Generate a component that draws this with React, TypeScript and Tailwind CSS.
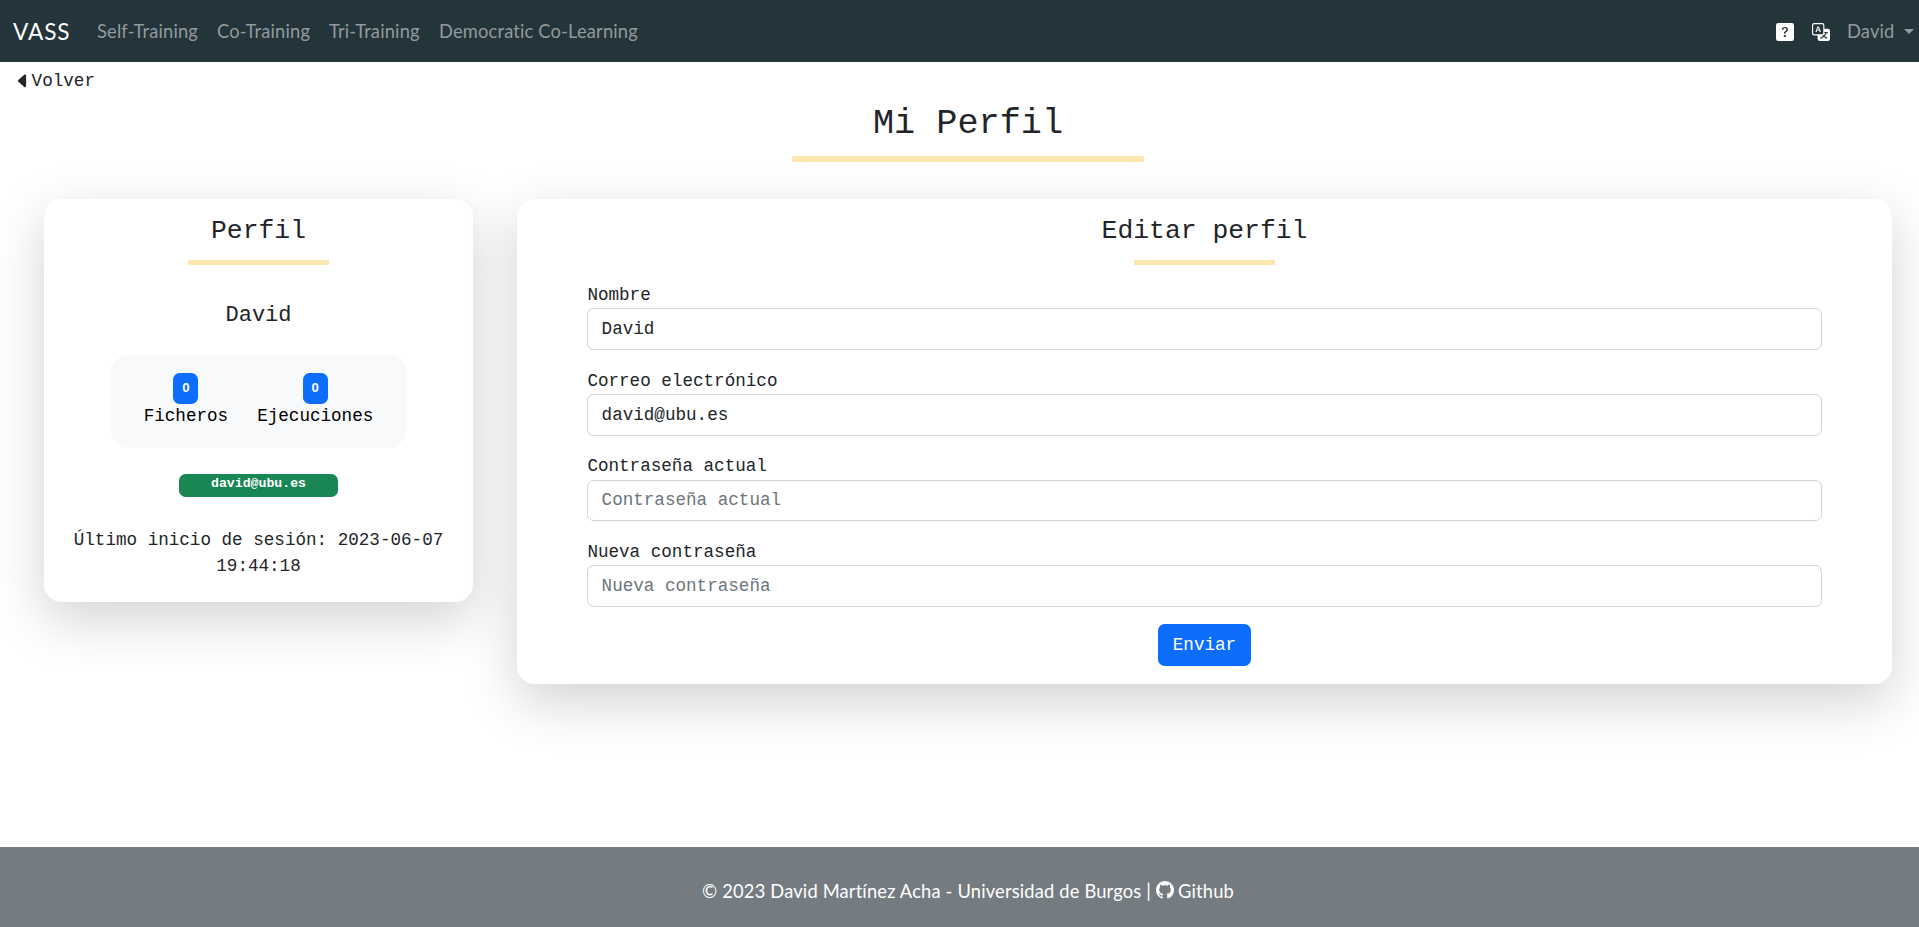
import { BsCaretLeftFill, BsGithub, BsQuestionSquareFill, BsTranslate } from "react-icons/bs";

const navLinks = [
  { label: "Self-Training", width: "w-[102px]" },
  { label: "Co-Training", width: "w-[94px]" },
  { label: "Tri-Training", width: "w-[92px]" },
  { label: "Democratic Co-Learning", width: "w-[198px]" },
];

const fields = [
  { label: "Nombre", type: "text", value: "David" },
  { label: "Correo electrónico", type: "text", value: "david@ubu.es" },
  { label: "Contraseña actual", type: "password", value: "" },
  { label: "Nueva contraseña", type: "password", value: "" },
];

function Navbar() {
  return (
    <nav className="flex h-[62px] items-center bg-[#24343b] pt-px pr-[5px] pl-[13px] font-['Lato',sans-serif] text-[18.3px] tracking-[0.18px] text-[#929a9d]">
      <a className="w-[84px] text-[22.6px] leading-[33px] tracking-[0.9px] text-white">VASS</a>
      <div className="flex gap-[18px]">
        {navLinks.map((l) => (
          <a key={l.label} className={`${l.width} whitespace-nowrap`}>
            {l.label}
          </a>
        ))}
      </div>
      <div className="ml-auto flex items-center">
        <BsQuestionSquareFill className="mr-[18px] size-[18px] text-white" />
        <BsTranslate className="mr-[17px] size-[18px] text-white" />
        <span className="w-[57px]">David</span>
        <span className="border-x-[5.3px] border-t-[5.3px] border-x-transparent border-t-[#929a9d]" />
      </div>
    </nav>
  );
}

function CardTitle({ children }: { children: string }) {
  return (
    <>
      <h3 className="text-center text-[26.4px] leading-[32px]">{children}</h3>
      <div className="mx-auto mt-[13px] h-[5px] w-[141px] bg-[#fce8ae]" />
    </>
  );
}

function Counter({ label }: { label: string }) {
  return (
    <div className="flex flex-col items-center">
      <span className="h-[31px] w-[25px] rounded-[6.6px] bg-[#0d6efd] pt-2 text-center font-['Liberation_Sans',sans-serif] text-[13.2px] leading-[13.2px] font-bold text-white">
        0
      </span>
      <span className="-mt-px text-black">{label}</span>
    </div>
  );
}

const card = "rounded-[17.6px] bg-white pt-4 shadow-[0_17.6px_52.8px_rgba(0,0,0,0.175)]";

export default function App() {
  return (
    <div className="flex h-[927px] flex-col overflow-hidden bg-white font-['Liberation_Mono',monospace] text-[17.6px] leading-[26.4px] text-[#212529]">
      <Navbar />
      <main className="flex-1">
        <a className="flex items-center pt-[6px] pl-[14px]">
          <BsCaretLeftFill className="size-[17.6px]" />
          Volver
        </a>
        <h1 className="mt-[8.6px] pl-[17px] text-center text-[35.2px] leading-[42px]">Mi Perfil</h1>
        <div className="mt-[11px] ml-[792px] h-[6px] w-[352px] bg-[#fce8ae]" />

        <div className="mt-[37px] flex items-start gap-11 pr-[27px] pl-[44px]">
          <section className={`${card} h-[403px] w-[429px] shrink-0`}>
            <CardTitle>Perfil</CardTitle>
            <h5 className="mt-[38px] text-center text-[22px]">David</h5>
            <div className="mx-auto mt-[25.6px] flex h-[93px] w-[295px] justify-center gap-[29px] rounded-[17.6px] bg-[#f8f9fa] pt-[18px]">
              <Counter label="Ficheros" />
              <Counter label="Ejecuciones" />
            </div>
            <div className="mx-auto mt-[26px] h-[23px] w-[159px] rounded-[6.6px] bg-[#198754] pt-[3px] text-center text-[13.2px] leading-[13.2px] font-bold text-white">
              david@ubu.es
            </div>
            <p className="mt-[30px] px-[26px] text-center leading-[26px]">Último inicio de sesión: 2023-06-07 19:44:18</p>
          </section>

          <section className={`${card} h-[485px] flex-1`}>
            <CardTitle>Editar perfil</CardTitle>
            <form className="mx-[70.4px] mt-[17px] flex flex-col gap-[17.4px]">
              {fields.map((f) => (
                <label key={f.label} className="block">
                  <span className="block">{f.label}</span>
                  <input
                    type={f.type}
                    defaultValue={f.value}
                    placeholder={f.label}
                    className="block h-[41.8px] w-full rounded-[6.6px] border border-[#ced4da] bg-white px-[13.2px] placeholder:text-[#6c757d]"
                  />
                </label>
              ))}
              <button type="button" className="h-[42px] w-[92.5px] self-center rounded-[6.6px] bg-[#0d6efd] text-white">
                Enviar
              </button>
            </form>
          </section>
        </div>
      </main>
      <footer className="flex h-20 items-center justify-center bg-[#747c81] pt-[9px] pl-[17px] font-['Lato',sans-serif] text-[18.3px] tracking-[0.18px] text-white">
        <span className="mr-[5px] whitespace-nowrap">© 2023 David Martínez Acha - Universidad de Burgos |</span>
        <BsGithub className="mr-1 mb-[3px] size-[18px]" />
        <a>Github</a>
      </footer>
    </div>
  );
}
